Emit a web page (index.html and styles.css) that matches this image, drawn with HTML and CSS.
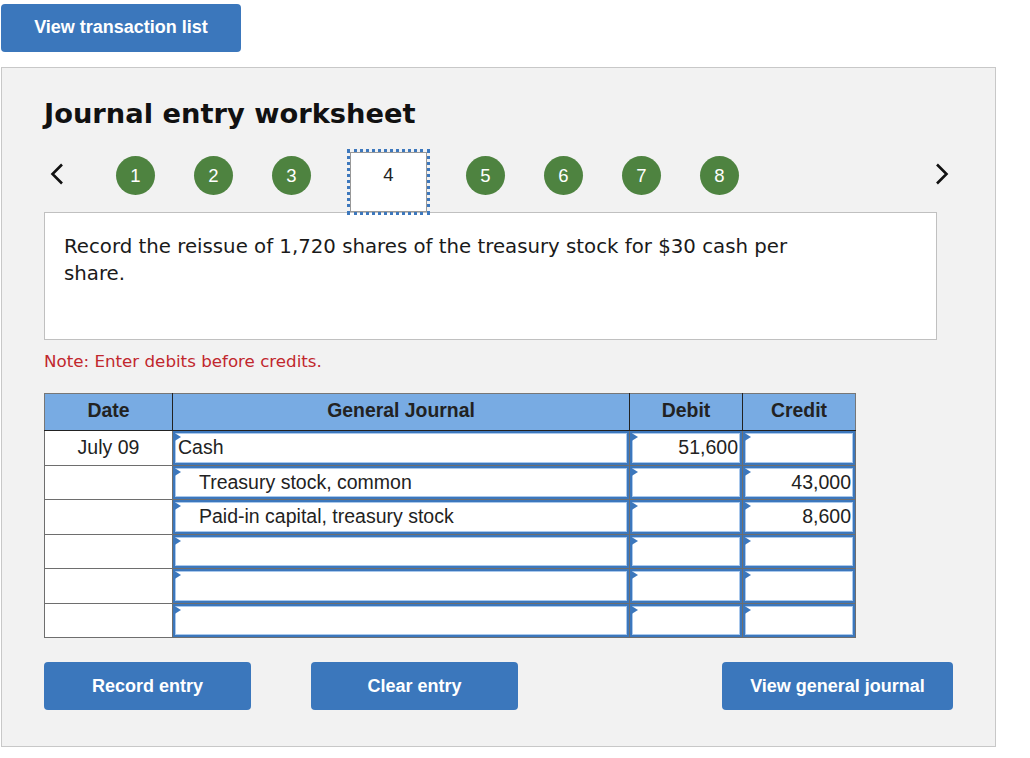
FILE: index.html
```html
<!DOCTYPE html>
<html lang="en">
<head>
<meta charset="utf-8">
<title>Journal entry worksheet</title>
<link rel="stylesheet" href="styles.css">
</head>
<body>
<button class="btn btn-top">View transaction list</button>
<section class="panel">
  <h1 class="title">Journal entry worksheet</h1>
  <nav class="steps">
    <svg class="chev chev-left" width="14" height="22" viewBox="0 0 14 22"><polyline points="12,1.5 2.5,11 12,20.5" fill="none" stroke="#111" stroke-width="2.6" stroke-linejoin="miter"/></svg>
    <span class="step">1</span>
    <span class="step">2</span>
    <span class="step">3</span>
    <span class="step-current">4</span>
    <span class="step">5</span>
    <span class="step">6</span>
    <span class="step">7</span>
    <span class="step">8</span>
    <svg class="chev chev-right" width="14" height="22" viewBox="0 0 14 22"><polyline points="2,1.5 11.5,11 2,20.5" fill="none" stroke="#111" stroke-width="2.6" stroke-linejoin="miter"/></svg>
  </nav>
  <div class="prompt">
    <p class="prompt-text">Record the reissue of 1,720 shares of the treasury stock for $30 cash per share.</p>
  </div>
  <p class="note">Note: Enter debits before credits.</p>
  <table class="journal">
    <colgroup>
      <col class="c-date"><col class="c-acct"><col class="c-amt"><col class="c-amt">
    </colgroup>
    <thead>
      <tr><th>Date</th><th>General Journal</th><th>Debit</th><th>Credit</th></tr>
    </thead>
    <tbody>
      <tr>
        <td class="date">July 09</td>
        <td class="in"><div class="field">Cash</div></td>
        <td class="in"><div class="field num">51,600</div></td>
        <td class="in"><div class="field num"></div></td>
      </tr>
      <tr>
        <td class="date"></td>
        <td class="in"><div class="field indent">Treasury stock, common</div></td>
        <td class="in"><div class="field num"></div></td>
        <td class="in"><div class="field num">43,000</div></td>
      </tr>
      <tr>
        <td class="date"></td>
        <td class="in"><div class="field indent">Paid-in capital, treasury stock</div></td>
        <td class="in"><div class="field num"></div></td>
        <td class="in"><div class="field num">8,600</div></td>
      </tr>
      <tr>
        <td class="date"></td>
        <td class="in"><div class="field"></div></td>
        <td class="in"><div class="field num"></div></td>
        <td class="in"><div class="field num"></div></td>
      </tr>
      <tr>
        <td class="date"></td>
        <td class="in"><div class="field"></div></td>
        <td class="in"><div class="field num"></div></td>
        <td class="in"><div class="field num"></div></td>
      </tr>
      <tr>
        <td class="date"></td>
        <td class="in"><div class="field"></div></td>
        <td class="in"><div class="field num"></div></td>
        <td class="in"><div class="field num"></div></td>
      </tr>
    </tbody>
  </table>
  <div class="actions">
    <button class="btn btn-action">Record entry</button>
    <button class="btn btn-action btn-clear">Clear entry</button>
    <button class="btn btn-action btn-view">View general journal</button>
  </div>
</section>
</body>
</html>
```

FILE: styles.css
```css
* { box-sizing: border-box; }

body {
  margin: 0;
  font-family: "Liberation Sans", Arial, sans-serif;
  color: #222;
  background: #fff;
}

.btn {
  display: flex;
  align-items: center;
  justify-content: center;
  border: 0;
  border-radius: 4px;
  background: #3b77bc;
  color: #fff;
  font-family: "Liberation Sans", Arial, sans-serif;
  font-weight: bold;
  font-size: 18px;
  padding: 0;
  cursor: pointer;
}

.btn-top {
  margin: 4px 0 0 1px;
  width: 240px;
  height: 48px;
  padding-bottom: 1px;
}

.panel {
  margin: 15px 0 0 1px;
  width: 995px;
  background: #f2f2f2;
  border: 1px solid #c8c8c8;
  padding: 32px 0 36px 42px;
}

.title {
  margin: 0;
  font-family: "DejaVu Sans", Verdana, sans-serif;
  font-weight: bold;
  font-size: 27.3px;
  line-height: 27px;
  color: #111;
}

.steps {
  display: flex;
  align-items: flex-start;
  height: 60px;
  margin-top: 25px;
  gap: 39px;
}

.chev { flex: none; margin-top: 11px; }
.chev-left { margin-left: 6px; margin-right: 13px; }
.chev-right { margin-left: 157px; }

.step {
  flex: none;
  width: 39px;
  height: 39px;
  margin-top: 4px;
  border-radius: 50%;
  background: #4e8340;
  color: #fff;
  font-size: 18.5px;
  line-height: 39px;
  text-align: center;
}

.step-current {
  flex: none;
  width: 77px;
  height: 60px;
  background: #fff;
  border: 1px solid #999;
  outline: 3px dotted #3d78bd;
  font-size: 18.5px;
  line-height: 22px;
  padding-top: 11px;
  text-align: center;
  color: #222;
}

.prompt {
  width: 893px;
  height: 128px;
  background: #fff;
  border: 1px solid #c0c0c0;
  padding: 20px 20px 0 19px;
}

.prompt-text {
  margin: 0;
  max-width: 750px;
  font-family: "DejaVu Sans", Verdana, sans-serif;
  font-size: 19.75px;
  line-height: 27px;
  color: #1a1a1a;
}

.note {
  margin: 11px 0 0 0;
  font-family: "DejaVu Sans", Verdana, sans-serif;
  font-size: 16.7px;
  line-height: 20px;
  color: #c1272d;
}

.journal {
  margin-top: 22px;
  width: 811px;
  table-layout: fixed;
  border-collapse: collapse;
  background: #fff;
}

.c-date { width: 128px; }
.c-acct { width: 457px; }
.c-amt { width: 113px; }

.journal th {
  height: 37px;
  background: #78abe3;
  border: 1px solid #777;
  border-bottom-color: #222;
  border-left-color: #222;
  border-right-color: #222;
  font-size: 19.4px;
  font-weight: bold;
  color: #222;
  padding: 0 0 3px 0;
  text-align: center;
}
.journal th:first-child { border-left-color: #777; }
.journal th:last-child { border-right-color: #777; }

.journal td {
  border: 1px solid #6e6e6e;
  padding: 0;
  height: 34.5px;
  font-size: 19.5px;
  color: #222;
}

.journal td.date { text-align: center; }

.field {
  position: relative;
  height: 33.5px;
  border: 2px solid #3c77bc;
  box-shadow: inset 0 0 0 1px #a9c8ec;
  background: #fff;
  padding: 0 2px 0 3px;
  display: flex;
  align-items: center;
  white-space: nowrap;
  overflow: visible;
}

.field::before {
  content: "";
  position: absolute;
  left: -2px;
  top: -1px;
  width: 0;
  height: 0;
  border-left: 8px solid #3c77bc;
  border-top: 5px solid transparent;
  border-bottom: 5px solid transparent;
}

.field.indent { padding-left: 24px; }
.field.num { justify-content: flex-end; }

.actions {
  display: flex;
  width: 909px;
  margin-top: 24px;
}

.btn-action {
  width: 207px;
  height: 48px;
}
.btn-clear { margin-left: 60px; }
.btn-view { margin-left: auto; width: 231px; }
```
